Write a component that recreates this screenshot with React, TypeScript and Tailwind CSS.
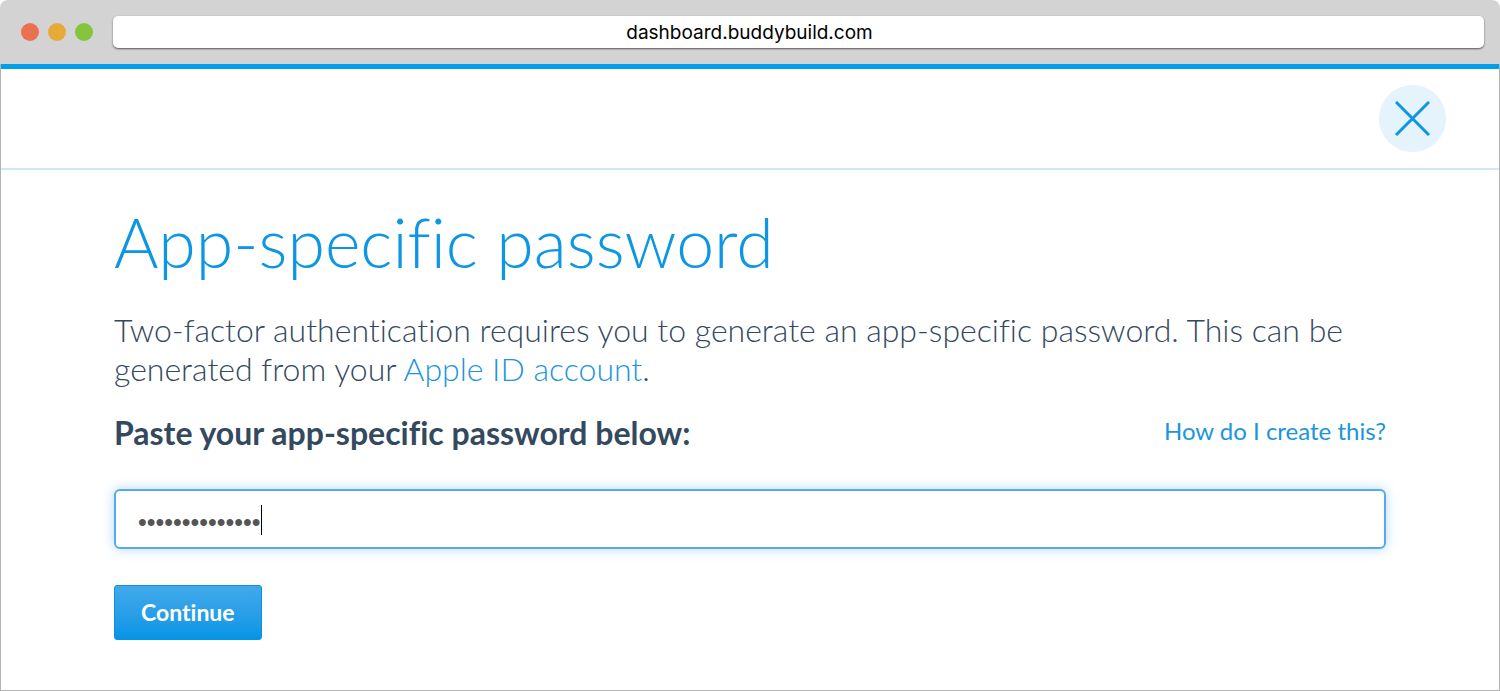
import { useState } from "react";

function BrowserBar() {
  return (
    <header className="flex h-16 items-center gap-5 rounded-t-lg bg-[#d3d3d3] pr-4 pl-[21px]">
      <div className="flex gap-[9px]">
        <span className="size-[18px] rounded-full bg-[#eb7050]" />
        <span className="size-[18px] rounded-full bg-[#e7aa38]" />
        <span className="size-[18px] rounded-full bg-[#86c43d]" />
      </div>
      <input
        type="text"
        aria-label="Address"
        readOnly
        value="dashboard.buddybuild.com"
        className="h-8 min-w-0 flex-1 rounded-[5px] bg-white pr-[98px] text-center font-['Inter',sans-serif] text-[19px] text-black shadow-[0_1px_2px_rgba(0,0,0,0.6)] outline-none"
      />
    </header>
  );
}

export default function App() {
  const [password, setPassword] = useState("abcdefghijklmn");

  return (
    <div className="flex min-h-screen flex-col bg-white font-['Lato',sans-serif] text-[#34495e] [font-variant-ligatures:none]">
      <BrowserBar />
      <main className="flex-1 border-x border-b border-[#b3b3b3]">
        <div className="flex items-center justify-end border-t-5 border-b-2 border-t-[#009fe8] border-b-[#cde8f6] py-4 pr-[53px]">
          <button
            type="button"
            aria-label="Close"
            className="flex size-[67px] items-center justify-center rounded-full bg-[#e5f3fc]"
          >
            <svg viewBox="0 0 35 35" className="size-[35px]" fill="none" stroke="#0d96e3" strokeWidth="3">
              <path d="M1 1 34 34M34 1 1 34" />
            </svg>
          </button>
        </div>

        <div className="px-[113px] pt-8 pb-12">
          <h1 className="text-[68px] leading-20 font-light text-[#0d96e3]">App-specific password</h1>
          <p className="mt-7 text-[32px] leading-[39px] font-light">
            Two-factor authentication requires you to generate an app-specific password. This can be
            generated from your{" "}
            <a href="#apple-id" className="text-[#1b95dc]">
              Apple ID account
            </a>
            .
          </p>
          <form onSubmit={(event) => event.preventDefault()}>
            <div className="mt-[25px] flex items-start justify-between">
              <label htmlFor="password" className="text-[32px] leading-10 font-bold">
                Paste your app-specific password below:
              </label>
              <a href="#help" className="text-2xl leading-9 text-[#1b95dc]">
                How do I create this?
              </a>
            </div>
            <div className="relative mt-9">
              <input
                id="password"
                type="password"
                value={password}
                onChange={(event) => setPassword(event.target.value)}
                className="block h-[60px] w-full rounded-md border-2 border-[#56a9ec] bg-white px-[22px] pt-1.5 font-['Liberation_Sans',sans-serif] text-[25px] text-[#555] caret-transparent shadow-[0_0_12px_rgba(86,169,236,0.45)] outline-none"
              />
              <span className="absolute top-4 left-[147px] h-[30px] w-px bg-black" />
            </div>
            <button
              type="submit"
              className="mt-9 h-[55px] rounded-[3px] border border-[#0894e2] bg-linear-to-b from-[#40a9ea] to-[#0095e6] px-[26px] text-[23px] font-bold text-white"
            >
              Continue
            </button>
          </form>
        </div>
      </main>
    </div>
  );
}
